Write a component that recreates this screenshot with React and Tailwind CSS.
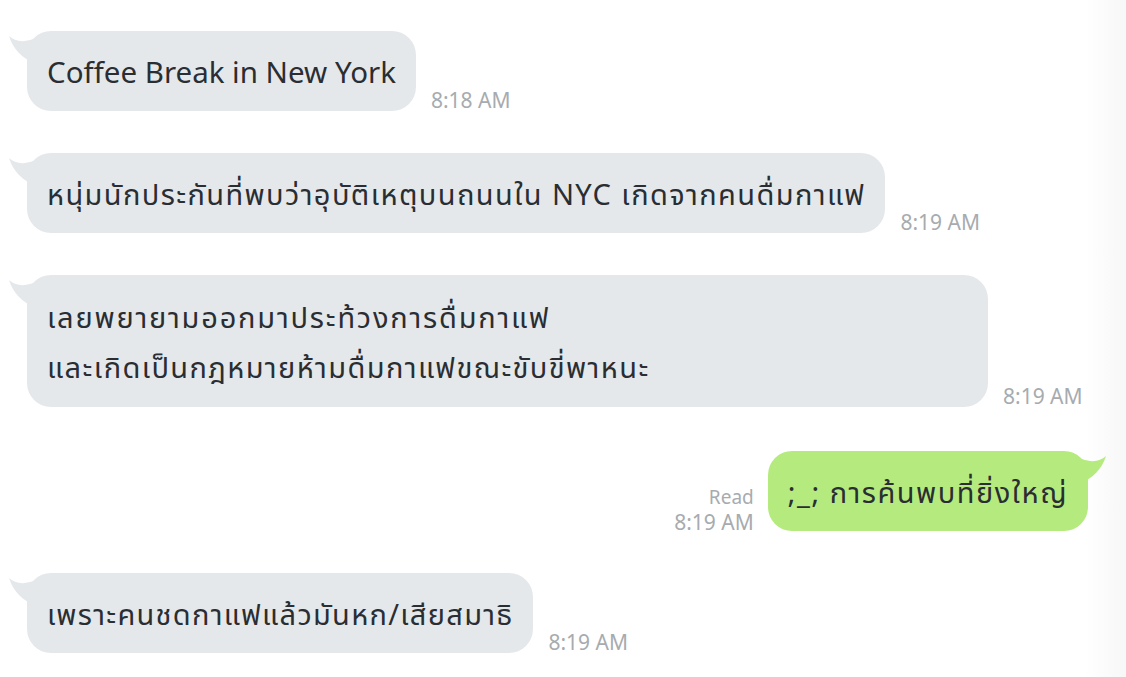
import React from "react";

const FONT = { fontFamily: '"Noto Sans", "Noto Sans Thai", "Open Sans", sans-serif' };

function InTail() {
  return (
    <svg className="absolute left-[-18px] top-[4px]" width="32" height="30" viewBox="0 0 32 30">
      <path d="M0 1 C6 6 13 8 24 4 L26 28 C14 24 4 14 0 1 Z" fill="#e5e8eb" />
    </svg>
  );
}

function OutTail() {
  return (
    <svg className="absolute right-[-18px] top-[4px]" width="32" height="30" viewBox="0 0 32 30">
      <path d="M32 1 C26 6 19 8 8 4 L6 28 C18 24 28 14 32 1 Z" fill="#b5eb7e" />
    </svg>
  );
}

function Time({ children }) {
  return (
    <span className="text-[21px] leading-[24px] text-[#a7abaf] whitespace-nowrap">{children}</span>
  );
}

function In({ lines, time, w = "", py = "pt-[16px] pb-[14px]" }) {
  return (
    <div className="flex items-end pl-[27px]">
      <div className={"relative rounded-[24px] bg-[#e5e8eb] px-[20px] text-[29px] leading-[50px] text-[#2a2e33] " + py + " " + w}>
        <InTail />
        {lines.map((l, i) => (
          <div key={i} className={"whitespace-nowrap relative " + l.c}>{l.t}</div>
        ))}
      </div>
      <div className="ml-[15px] mb-[-3px]">
        <Time>{time}</Time>
      </div>
    </div>
  );
}

export default function App() {
  return (
    <div className="relative w-[1126px] h-[677px] bg-white overflow-hidden" style={FONT}>
      <div className="absolute right-0 top-0 h-full w-[41px] bg-gradient-to-r from-white to-[#f7f7f7]" />
      <div className="relative flex flex-col gap-[42px] pt-[31px]">
        <In lines={[{ t: "Coffee Break in New York", c: "text-[29.5px]" }]} time="8:18 AM" />
        <In
          lines={[{ t: "หนุ่มนักประกันที่พบว่าอุบัติเหตุบนถนนใน NYC เกิดจากคนดื่มกาแฟ", c: "tracking-[1.4px]" }]}
          time="8:19 AM"
        />
        <In
          w="w-[961px]"
          py="pt-[17px] pb-[15px]"
          lines={[
            { t: "เลยพยายามออกมาประท้วงการดื่มกาแฟ", c: "tracking-[1.8px]" },
            { t: "และเกิดเป็นกฎหมายห้ามดื่มกาแฟขณะขับขี่พาหนะ", c: "tracking-[1.4px]" },
          ]}
          time="8:19 AM"
        />
        <div className="flex items-end justify-end pr-[38px] mt-[2px]">
          <div className="mr-[14px] mb-[-3px] flex flex-col items-end text-[#a7abaf]">
            <span className="text-[19px] leading-[26px]">Read</span>
            <Time>8:19 AM</Time>
          </div>
          <div className="relative rounded-[24px] bg-[#b5eb7e] px-[20px] pt-[16px] pb-[14px] text-[29px] leading-[50px] text-[#2a2e33]">
            <OutTail />
            <div className="whitespace-nowrap relative tracking-[1.5px]">;_; การค้นพบที่ยิ่งใหญ่</div>
          </div>
        </div>
        <In lines={[{ t: "เพราะคนชดกาแฟแล้วมันหก/เสียสมาธิ", c: "tracking-[1.3px]" }]} time="8:19 AM" />
      </div>
    </div>
  );
}
